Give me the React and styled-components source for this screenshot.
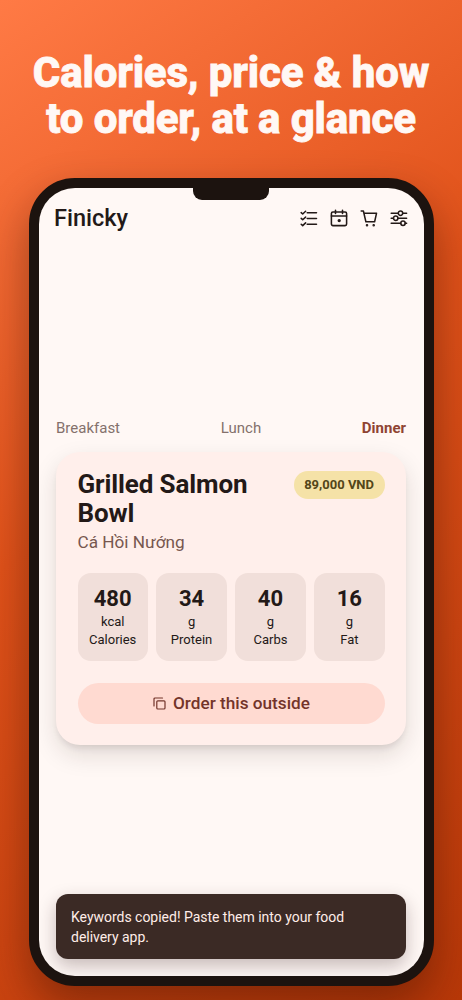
import React from "react";
import styled, { createGlobalStyle } from "styled-components";

const GlobalStyle = createGlobalStyle`
  *, *::before, *::after { box-sizing: border-box; }
  html, body { margin: 0; padding: 0; }
  body { font-family: Roboto, "Noto Sans", sans-serif; color: #231917; }
  h1, h2, p { margin: 0; }
  button { font-family: inherit; border: 0; padding: 0; background: none; color: inherit; }
`;

const Poster = styled.main`
  width: 462px;
  height: 1000px;
  overflow: hidden;
  display: flex;
  flex-direction: column;
  align-items: center;
  background: linear-gradient(145deg, #ff7a45 0%, #e0521a 43%, #b83808 100%);
`;

const Headline = styled.h1`
  margin-top: 50px;
  height: 128px;
  text-align: center;
  white-space: nowrap;
  font-size: 42px;
  line-height: 46px;
  font-weight: 800;
  letter-spacing: -0.16px;
  color: #fff8f5;
  -webkit-text-stroke: 0.8px #fff8f5;
`;

const Phone = styled.section`
  width: 405px;
  height: 808px;
  flex: none;
  border: 10px solid #1c130f;
  border-radius: 46px;
  background: #1c130f;
  box-shadow: 0 20px 44px rgba(50, 12, 0, 0.42);
`;

const Screen = styled.div`
  position: relative;
  height: 100%;
  overflow: hidden;
  border-radius: 36px;
  background: #fff8f5;
  display: flex;
  flex-direction: column;
  padding: 0 17.5px 17px;
`;

const Notch = styled.div`
  position: absolute;
  top: -1px;
  left: 50%;
  width: 76px;
  height: 13px;
  transform: translateX(-50%);
  border-radius: 0 0 9px 9px;
  background: #1c130f;
`;

const TopBar = styled.header`
  display: flex;
  align-items: center;
  justify-content: space-between;
  height: 60px;
  margin: 0 -1.5px 0 -2px;
`;

const Brand = styled.div`
  font-size: 23.5px;
  line-height: 28px;
  font-weight: 500;
`;

const Actions = styled.nav`
  display: flex;
  gap: 12px;
`;

const IconButton = styled.button`
  display: flex;
  width: 18px;
  height: 18px;
`;

const Icon = styled.svg`
  width: ${(p) => p.$size}px;
  height: ${(p) => p.$size}px;
  fill: none;
  stroke: currentColor;
  stroke-width: ${(p) => p.$weight};
  stroke-linecap: round;
  stroke-linejoin: round;
`;

const Meals = styled.nav`
  display: flex;
  justify-content: space-between;
  margin-top: 170px;
  height: 34px;
`;

const Meal = styled.span`
  font-size: 15px;
  line-height: 20px;
  font-weight: ${(p) => (p.$active ? 700 : 400)};
  color: ${(p) => (p.$active ? "#8f4433" : "#84716c")};
`;

const Card = styled.article`
  height: 293px;
  padding: 18px 21.5px 21px;
  border-radius: 24px;
  background: #ffefeb;
  box-shadow: 0 10px 24px rgba(40, 20, 15, 0.13), 0 5px 6px -2px rgba(40, 20, 15, 0.1);
`;

const CardHead = styled.div`
  display: flex;
  justify-content: space-between;
  align-items: flex-start;
`;

const DishName = styled.h2`
  width: 190px;
  font-size: 26px;
  line-height: 29px;
  font-weight: 700;
  letter-spacing: -0.12px;
`;

const Price = styled.span`
  height: 28px;
  margin-top: 1px;
  padding: 0 10.5px;
  border-radius: 14px;
  background: #f5e2a7;
  color: #534619;
  font-size: 13px;
  line-height: 27px;
  font-weight: 700;
`;

const LocalName = styled.p`
  margin-top: 3px;
  font-size: 17.2px;
  line-height: 22px;
  color: #77574f;
`;

const Nutrition = styled.div`
  display: grid;
  grid-template-columns: repeat(4, 1fr);
  gap: 8.5px;
  margin-top: 20px;
`;

const Nutrient = styled.div`
  height: 88px;
  padding-top: 13px;
  border-radius: 13px;
  background: #f1dfda;
  text-align: center;
  font-size: 13px;
  line-height: 18px;
`;

const Amount = styled.div`
  font-size: 22px;
  line-height: 26px;
  margin-bottom: 1px;
  font-weight: 700;
`;

const OrderButton = styled.button`
  display: flex;
  align-items: center;
  justify-content: center;
  gap: 7px;
  width: 100%;
  height: 41px;
  margin-top: 22px;
  padding: 0 0 1px 1px;
  border-radius: 21px;
  background: #ffdad1;
  color: #73342a;
  font-size: 17.2px;
  font-weight: 500;
`;

const Snackbar = styled.div`
  height: 65px;
  margin-top: auto;
  padding: 12.5px 15px;
  border-radius: 12px;
  background: #3b2a25;
  color: #ffede8;
  font-size: 14px;
  line-height: 20px;
  letter-spacing: -0.02px;
  box-shadow: 0 7px 18px rgba(50, 25, 30, 0.28);
`;

const actions = [
  {
    label: "Checklist",
    art: <path d="M1.200 3.600l1.500 1.400 2.900-2.700M1.200 9.400l1.500 1.400 2.900-2.700M1.200 15.200l1.500 1.400 2.900-2.700M7.200 3.700h9.300M7.200 9.500h9.300M7.200 15.300h9.300" />,
  },
  {
    label: "Calendar",
    art: (
      <>
        <rect x="1.400" y="3" width="15.200" height="13.600" rx="1.500" />
        <path d="M1.400 7h15.200M5.500 1.200v3.300M12.500 1.200v3.300" />
        <circle cx="9.200" cy="11.600" r="0.900" fill="currentColor" />
      </>
    ),
  },
  {
    label: "Cart",
    art: (
      <>
        <path d="M1.200 2h2.200l2.500 10.800h8.700l1.900-8.500H4" />
        <circle cx="7" cy="16.200" r="0.500" fill="currentColor" />
        <circle cx="13.700" cy="16.200" r="0.500" fill="currentColor" />
      </>
    ),
  },
  {
    label: "Preferences",
    art: (
      <>
        <path d="M1.200 4.200h7M12.700 4.200h3.900M1.200 9.200h2.200M7.900 9.200h8.700M1.200 14.200h9.500M15.200 14.200h1.400" />
        <circle cx="10.500" cy="4.200" r="2.200" />
        <circle cx="5.700" cy="9.200" r="2.200" />
        <circle cx="13" cy="14.200" r="2.200" />
      </>
    ),
  },
];

const nutrients = [
  ["480", "kcal", "Calories"],
  ["34", "g", "Protein"],
  ["40", "g", "Carbs"],
  ["16", "g", "Fat"],
];

export default function App() {
  return (
    <>
      <GlobalStyle />
      <Poster>
        <Headline>Calories, price &amp; how<br />to order, at a glance</Headline>
        <Phone>
          <Screen>
            <Notch />
            <TopBar>
              <Brand>Finicky</Brand>
              <Actions>
                {actions.map(({ label, art }) => (
                  <IconButton key={label} aria-label={label}>
                    <Icon viewBox="0 0 18 18" $size={18} $weight={1.55}>{art}</Icon>
                  </IconButton>
                ))}
              </Actions>
            </TopBar>
            <Meals>
              <Meal>Breakfast</Meal>
              <Meal>Lunch</Meal>
              <Meal $active>Dinner</Meal>
            </Meals>
            <Card>
              <CardHead>
                <DishName>Grilled Salmon Bowl</DishName>
                <Price>89,000 VND</Price>
              </CardHead>
              <LocalName>Cá Hồi Nướng</LocalName>
              <Nutrition>
                {nutrients.map(([amount, unit, name]) => (
                  <Nutrient key={name}>
                    <Amount>{amount}</Amount>
                    <div>{unit}</div>
                    <div>{name}</div>
                  </Nutrient>
                ))}
              </Nutrition>
              <OrderButton>
                <Icon viewBox="0 0 13 13" $size={13} $weight={1.2}>
                  <rect x="3.800" y="3.800" width="8.200" height="8.200" rx="1" />
                  <path d="M1 9V2a1 1 0 0 1 1-1h7.500" />
                </Icon>
                Order this outside
              </OrderButton>
            </Card>
            <Snackbar>Keywords copied! Paste them into your food delivery app.</Snackbar>
          </Screen>
        </Phone>
      </Poster>
    </>
  );
}
